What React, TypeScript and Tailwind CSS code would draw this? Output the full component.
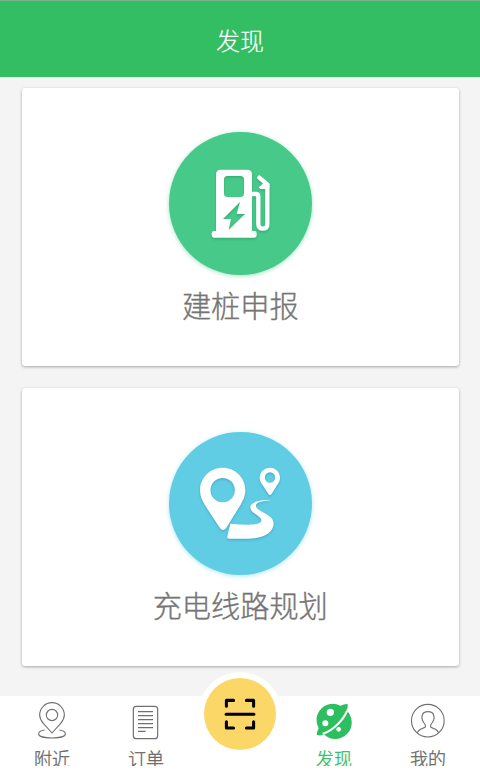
import type { ReactNode } from "react";

function PumpIcon() {
  return (
    <svg viewBox="0 9 480 480" className="size-40 overflow-visible" fill="none">
      <g className="drop-shadow-[0_4px_3px_rgba(0,80,40,0.25)]">
        <path
          fill="#fff"
          fillRule="evenodd"
          d="M182 149H262Q276 149 276 163V333H283Q290 333 290 340V346Q290 353 283 353H162Q155 353 155 346V340Q155 333 162 333H168V163Q168 149 182 149ZM203 168Q192 168 192 179V220Q192 231 203 231H241Q252 231 252 220V179Q252 168 241 168ZM240 246L189 297H213L206 330L255 282H230Z"
        />
        <path d="M274 222H288Q295 222 295 230V312Q295 326 309 326Q322 326 322 312V193L298 173" stroke="#fff" strokeWidth="13" strokeLinecap="round" strokeLinejoin="round" />
        <path d="M309 180L328 191V207H300L296 202L308 192Z" fill="#fff" />
      </g>
    </svg>
  );
}

function RouteIcon() {
  return (
    <svg viewBox="0 9 480 480" className="size-40 overflow-visible">
      <g fill="#fff" fillRule="evenodd" className="drop-shadow-[0_4px_3px_rgba(0,70,110,0.25)]">
        <path d="M188 143C226 143 256 173 256 211C256 228 249 241 242 254L199 323Q189 337 179 323L134 254C126 241 120 228 120 211C120 173 150 143 188 143ZM188 174A36.500 36.500 0 1 0 188 247A36.500 36.500 0 1 0 188 174Z" />
        <path d="M330 143C347 143 360 156 360 173C360 181 357 187 353 193L335 221Q330 229 325 221L306 193C302 187 299 181 299 173C299 156 313 143 330 143ZM330 157A15.500 15.500 0 1 0 330 188A15.500 15.500 0 1 0 330 157Z" />
        <path d="M334 241C306 238 271 245 271 262C271 281 304 287 304 301C304 313 282 314 268 314Q240 314 211 311L202 349Q200 356 208 356H265C309 356 341 339 341 310C341 281 288 275 288 257C288 246 308 243 334 241Z" />
      </g>
    </svg>
  );
}

function NearbyIcon() {
  return (
    <svg viewBox="108 120 96 120" className="h-10 w-8 overflow-visible" fill="none" stroke="#707070" strokeWidth="3.3">
      <path d="M156 219L130 190C122 181 119 174 119 165A37 37 0 0 1 193 165C193 174 190 181 182 190Z" />
      <circle cx="156" cy="165" r="17" />
      <path d="M134 210C122 212 116 216 116 221C116 229 134 234 156 234S196 229 196 221C196 216 190 212 178 210" />
    </svg>
  );
}

function OrderIcon() {
  return (
    <svg viewBox="390 120 96 120" className="h-10 w-8 overflow-visible" fill="none" stroke="#707070" strokeWidth="3.6">
      <rect x="400" y="139" width="73" height="97" rx="9" />
      <path d="M414 155H459M414 167H459M414 179H459M414 191H459M414 203H459M414 214H437" />
    </svg>
  );
}

function DiscoverIcon() {
  return (
    <svg viewBox="234 120 96 120" className="h-10 w-8 overflow-visible">
      <path
        fill="#2dbe60"
        d="M301 137Q314 131 322 132Q326 138 319 151A49 49 0 0 1 253 224Q240 228 231 225Q229 218 236 205A49 49 0 0 1 301 137Z"
      />
      <path d="M321 153C310 180 280 211 248 222" fill="none" stroke="#fff" strokeWidth="6" />
      <g fill="#fff">
        <circle cx="271" cy="157" r="11" />
        <circle cx="256" cy="190" r="9" />
        <circle cx="296" cy="208" r="7" />
      </g>
    </svg>
  );
}

function ProfileIcon() {
  return (
    <svg viewBox="516 120 96 120" className="h-10 w-8 overflow-visible" fill="none" stroke="#707070" strokeWidth="3.4">
      <circle cx="563.5" cy="182" r="49" />
      <path d="M532 219C534 208 547 206 555 202C558 199 556 194 552 189C546 181 545 171 547 165C549 158 556 155 564 155S579 158 581 165C583 171 582 181 576 189C572 194 570 199 573 202C581 206 594 208 596 219" />
    </svg>
  );
}

function ScanIcon() {
  return (
    <svg viewBox="0 0 100 100" className="size-[34px]" fill="none" stroke="#000" strokeWidth="9" strokeLinecap="round" strokeLinejoin="round">
      <path d="M10 27V10H31M69 10H90V27M10 73V91H31M69 91H90V73M9 50.5H91" />
    </svg>
  );
}

function Card({ title, color, children }: { title: string; color: string; children: ReactNode }) {
  return (
    <section className="flex h-[278px] flex-col items-center rounded-[3px] bg-white pt-[43.5px] shadow-[0_1px_3px_rgba(0,0,0,0.32)]">
      <div className={`flex size-[143px] items-center justify-center rounded-full ${color}`}>
        <div className="-m-[8.5px]">{children}</div>
      </div>
      <h2 className="mt-[8.5px] text-[29.2px] leading-[42px] font-light text-[#757575] [-webkit-text-stroke:0.35px_#757575]">{title}</h2>
    </section>
  );
}

function Tab({ label, active = false, children }: { label: string; active?: boolean; children: ReactNode }) {
  return (
    <button className={`flex w-[94px] flex-col items-center pt-1 ${active ? "text-[#2dbe60]" : "text-[#666]"}`}>
      {children}
      <span className="mt-1.5 text-[18px] leading-6 font-light whitespace-nowrap [-webkit-text-stroke:0.3px_currentColor]">{label}</span>
    </button>
  );
}

export default function App() {
  return (
    <div className="flex h-[770px] w-[480px] flex-col overflow-hidden bg-[#f4f4f4] font-['Noto_Sans_CJK_SC',sans-serif]">
      <header className="flex h-[77px] shrink-0 items-center justify-center border-t border-[#77b58e] bg-[#34be63] pt-0.5">
        <h1 className="text-[24px] leading-8 font-light text-white [-webkit-text-stroke:0.2px_white]">发现</h1>
      </header>
      <main className="flex h-[619px] shrink-0 flex-col gap-[22px] pt-[11px] pr-[21px] pl-[21.5px]">
        <Card title="建桩申报" color="bg-[#47c98a] shadow-[0_1px_4px_rgba(71,201,138,0.5)]">
          <PumpIcon />
        </Card>
        <Card title="充电线路规划" color="bg-[#60cde5] shadow-[0_1px_4px_rgba(96,205,229,0.5)]">
          <RouteIcon />
        </Card>
      </main>
      <div className="relative h-[74px] shrink-0 bg-white">
        <nav className="flex h-[70px] justify-center overflow-hidden">
          <Tab label="附近"><NearbyIcon /></Tab>
          <Tab label="订单"><OrderIcon /></Tab>
          <div className="w-[94px]" />
          <Tab label="发现" active><DiscoverIcon /></Tab>
          <Tab label="我的"><ProfileIcon /></Tab>
        </nav>
        <button className="absolute -top-[24.5px] left-1/2 flex size-[84px] -translate-x-1/2 items-center justify-center rounded-full bg-white">
          <span className="flex size-[72px] items-center justify-center rounded-full bg-[#fad766]">
            <ScanIcon />
          </span>
        </button>
      </div>
    </div>
  );
}
